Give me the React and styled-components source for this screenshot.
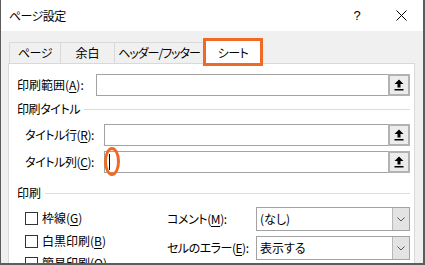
import React from "react";
import styled, { createGlobalStyle } from "styled-components";

const Global = createGlobalStyle`
  html, body { margin: 0; padding: 0; background: #fff; }
  body {
    font-family: "Noto Sans CJK JP", "Noto Sans", sans-serif;
    font-size: 12px;
    color: #000;
    font-feature-settings: "palt";
  }
  * { box-sizing: border-box; }
`;

const ORANGE = "#ef6a24";

const Window = styled.div`
  width: 425px;
  height: 265px;
  overflow: hidden;
  display: flex;
  flex-direction: column;
  border-left: 1px solid #5c5c5c;
  border-right: 2px solid #5c5c5c;
  border-bottom: 2px solid #5c5c5c;
  background: #f0f0f0;
`;

const TitleBar = styled.div`
  flex: none;
  height: 31px;
  background: #fff;
  display: flex;
  align-items: center;
  padding-left: 8px;
`;

const Title = styled.div`
  flex: 1;
  font-size: 12px;
  line-height: 16px;
  letter-spacing: -0.6px;
`;

const TitleButton = styled.div`
  width: 44px;
  height: 31px;
  display: flex;
  align-items: center;
  justify-content: center;
  font-family: "Liberation Sans", sans-serif;
  font-size: 13px;
`;

const Body = styled.div`
  flex: 1;
  display: flex;
  flex-direction: column;
  padding: 0 8px 0 7px;
  min-height: 0;
`;

const TabRow = styled.div`
  flex: none;
  margin-top: 11px;
  height: 21px;
  display: flex;
  align-items: flex-end;
  padding-left: 1px;
  position: relative;
  z-index: 1;
`;

const Tab = styled.div`
  width: ${(p) => p.$w}px;
  flex: none;
  height: ${(p) => (p.$active ? 25 : 21)}px;
  margin-bottom: ${(p) => (p.$active ? -1 : 0)}px;
  border-top: 1px solid #d9d9d9;
  border-left: 1px solid #d9d9d9;
  background: ${(p) => (p.$active ? "#fff" : "#f0f0f0")};
  display: flex;
  align-items: center;
  justify-content: center;
  padding-top: ${(p) => (p.$active ? 1 : 0)}px;
  font-size: 12px;
  line-height: 16px;
  white-space: nowrap;
  letter-spacing: ${(p) => p.$ls || 0}px;
  position: relative;
`;

const TabHighlight = styled.div`
  position: absolute;
  left: -1px;
  top: -2px;
  width: 60px;
  height: 28px;
  border: 3px solid ${ORANGE};
  pointer-events: none;
`;

const Panel = styled.div`
  flex: 1;
  background: #fff;
  border: 1px solid #d9d9d9;
  border-bottom: none;
  padding: 10px 4px 0 8px;
  display: flex;
  flex-direction: column;
  min-height: 0;
`;

const Row = styled.div`
  display: flex;
  align-items: center;
  height: 22px;
  margin-top: ${(p) => p.$mt || 0}px;
  padding-left: ${(p) => p.$indent || 0}px;
`;

const Label = styled.div`
  width: ${(p) => p.$w}px;
  flex: none;
  font-size: 12px;
  line-height: 16px;
  white-space: nowrap;
  letter-spacing: ${(p) => p.$ls || 0}px;
`;

const U = styled.span`
  text-decoration: underline;
  text-underline-offset: 2px;
`;

const Field = styled.div`
  flex: 1;
  height: 22px;
  display: flex;
  align-items: center;
  border: 1px solid #a3a3a3;
  background: #fff;
  position: relative;
`;

const FieldText = styled.div`
  flex: 1;
  height: 100%;
  display: flex;
  align-items: center;
  padding-left: 4px;
`;

const Caret = styled.div`
  width: 1px;
  height: 16px;
  background: #000;
`;

const CaretMark = styled.div`
  position: absolute;
  left: -1px;
  top: -5px;
  width: 16px;
  height: 29px;
  border: 3px solid ${ORANGE};
  border-radius: 50%;
  pointer-events: none;
`;

const RefButton = styled.div`
  width: 22px;
  height: 22px;
  margin: -1px -1px -1px 0;
  border: 2px solid #b2b2b2;
  background: #ececec;
  display: flex;
  align-items: center;
  justify-content: center;
`;

const Section = styled.div`
  display: flex;
  align-items: center;
  height: 16px;
  margin-top: ${(p) => p.$mt}px;
  font-size: 12px;
  line-height: 16px;
  letter-spacing: ${(p) => p.$ls || 0}px;
`;

const SectionLine = styled.div`
  flex: 1;
  height: 1px;
  background: #dcdcdc;
  margin-left: 4px;
`;

const Bottom = styled.div`
  display: grid;
  grid-template-columns: 142px 1fr;
  padding-left: 8px;
`;

const CheckCol = styled.div`
  padding-top: 11px;
  display: flex;
  flex-direction: column;
`;

const CheckRow = styled.div`
  height: 22.5px;
  display: flex;
  align-items: flex-start;
  font-size: 12px;
  line-height: 13px;
`;

const Box = styled.div`
  width: 13px;
  height: 13px;
  border: 1px solid #333;
  background: #fff;
  margin-right: 4px;
  flex: none;
`;

const CheckText = styled.div`
  margin-top: -2px;
  line-height: 16px;
  white-space: nowrap;
`;

const SelectCol = styled.div`
  padding-top: 6px;
  display: flex;
  flex-direction: column;
  gap: 5px;
`;

const SelectRow = styled.div`
  display: flex;
  align-items: center;
  height: 24px;
`;

const Select = styled.div`
  flex: 1;
  height: 24px;
  display: flex;
  border: 1px solid #a3a3a3;
  background: #fff;
`;

const SelectText = styled.div`
  flex: 1;
  display: flex;
  align-items: center;
  padding-left: 3px;
  font-size: 12px;
  line-height: 16px;
`;

const DropButton = styled.div`
  width: 17px;
  border-left: 1px solid #b9b9b9;
  background: #e3e3e3;
  display: flex;
  align-items: center;
  justify-content: center;
`;

const UpArrow = () => (
  <svg width="10" height="12" viewBox="0 0 10 12">
    <path d="M5 0.5 L9.5 5 H6.5 V8.5 H3.5 V5 H0.5 Z" fill="#000" />
    <rect x="0.5" y="10" width="9" height="1.5" fill="#000" />
  </svg>
);

const Chevron = () => (
  <svg width="8" height="5" viewBox="0 0 8 5">
    <path d="M0.5 0.5 L4 4 L7.5 0.5" fill="none" stroke="#555" strokeWidth="1" />
  </svg>
);

const CloseIcon = () => (
  <svg width="11" height="11" viewBox="0 0 11 11">
    <path d="M0.5 0.5 L10.5 10.5 M10.5 0.5 L0.5 10.5" stroke="#000" strokeWidth="1" />
  </svg>
);

export default function App() {
  return (
    <>
      <Global />
      <Window>
        <TitleBar>
          <Title>ページ設定</Title>
          <TitleButton>?</TitleButton>
          <TitleButton>
            <CloseIcon />
          </TitleButton>
        </TitleBar>
        <Body>
          <TabRow>
            <Tab $w={51} $ls={-0.5}>ページ</Tab>
            <Tab $w={54}>余白</Tab>
            <Tab $w={89} $ls={-1}>ヘッダー/フッター</Tab>
            <Tab $w={59} $ls={-0.5} $active>
              シート
              <TabHighlight />
            </Tab>
          </TabRow>
          <Panel>
            <Row>
              <Label $w={79}>
                印刷範囲(<U>A</U>):
              </Label>
              <Field>
                <FieldText />
                <RefButton>
                  <UpArrow />
                </RefButton>
              </Field>
            </Row>
            <Section $mt={5} $ls={-0.4}>
              印刷タイトル
              <SectionLine />
            </Section>
            <Row $mt={7} $indent={8}>
              <Label $w={79} $ls={-0.4}>
                タイトル行(<U>R</U>):
              </Label>
              <Field>
                <FieldText />
                <RefButton>
                  <UpArrow />
                </RefButton>
              </Field>
            </Row>
            <Row $mt={5} $indent={8}>
              <Label $w={79} $ls={-0.4}>
                タイトル列(<U>C</U>):
              </Label>
              <Field>
                <FieldText>
                  <Caret />
                </FieldText>
                <RefButton>
                  <UpArrow />
                </RefButton>
                <CaretMark />
              </Field>
            </Row>
            <Section $mt={12}>
              印刷
              <SectionLine />
            </Section>
            <Bottom>
              <CheckCol>
                <CheckRow>
                  <Box />
                  <CheckText>
                    枠線(<U>G</U>)
                  </CheckText>
                </CheckRow>
                <CheckRow>
                  <Box />
                  <CheckText>
                    白黒印刷(<U>B</U>)
                  </CheckText>
                </CheckRow>
                <CheckRow>
                  <Box />
                  <CheckText>
                    簡易印刷(<U>Q</U>)
                  </CheckText>
                </CheckRow>
              </CheckCol>
              <SelectCol>
                <SelectRow>
                  <Label $w={89} $ls={-0.4}>
                    コメント(<U>M</U>):
                  </Label>
                  <Select>
                    <SelectText>(なし)</SelectText>
                    <DropButton>
                      <Chevron />
                    </DropButton>
                  </Select>
                </SelectRow>
                <SelectRow>
                  <Label $w={89} $ls={-0.5}>
                    セルのエラー(<U>E</U>):
                  </Label>
                  <Select>
                    <SelectText>表示する</SelectText>
                    <DropButton>
                      <Chevron />
                    </DropButton>
                  </Select>
                </SelectRow>
              </SelectCol>
            </Bottom>
          </Panel>
        </Body>
      </Window>
    </>
  );
}
